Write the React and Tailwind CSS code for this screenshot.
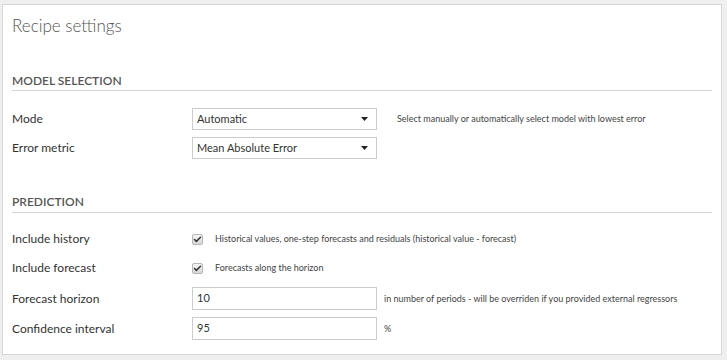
import { Check } from 'lucide-react'

const font = { fontFamily: 'Lato, "Open Sans", sans-serif' }

const Caret = () => (
    <svg width="7" height="4" viewBox="0 0 7 4" className="shrink-0">
        <path d="M0 0 L7 0 L3.5 4 Z" fill="#222" />
    </svg>
)

const SelectBox = ({ value }) => (
    <div className="w-[185px] h-[22px] border border-[#ccc] bg-white flex items-center justify-between pl-[4px] pr-[8px] text-[11px] text-[#333]">
        <span>{value}</span>
        <Caret />
    </div>
)

const InputBox = ({ value }) => (
    <div className="w-[185px] h-[23px] border border-[#ccc] bg-white flex items-center pl-[4px] text-[11px] text-[#333]">
        {value}
    </div>
)

const CheckBox = () => (
    <div className="w-[11px] h-[11px] rounded-[2px] border border-[#b5b5b5] bg-gradient-to-b from-[#f4f4f4] to-[#d8d8d8] flex items-center justify-center">
        <Check size={9} strokeWidth={4} className="text-[#333]" />
    </div>
)

const Row = ({ label, children, help, helpGap = 'ml-[20px]', className = '' }) => (
    <div className={`flex items-center h-[22px] ${className}`}>
        <div className="w-[180px] text-[12px] text-[#333]">{label}</div>
        {children}
        {help && <div className={`${helpGap} text-[9px] text-[#444]`}>{help}</div>}
    </div>
)

const Section = ({ title, className = '' }) => (
    <div className={`text-[12px] font-semibold text-[#555] leading-[16px] pb-[1px] border-b border-[#d5d5d5] ${className}`}>
        {title}
    </div>
)

export default function App() {
    return (
        <div className="w-[727px] h-[360px] bg-[#efefef] pt-[4px] pl-[2px]" style={font}>
            <div className="w-[720px] h-[351px] bg-white border border-[#d6d6d6] px-[9px] pt-[10px]">
                <div className="text-[17px] font-light leading-[22px] text-[#555]">Recipe settings</div>

                <Section title="MODEL SELECTION" className="mt-[36px]" />
                <Row label="Mode" help="Select manually or automatically select model with lowest error" className="mt-[17px]">
                    <SelectBox value="Automatic" />
                </Row>
                <Row label="Error metric" className="mt-[7px]">
                    <SelectBox value="Mean Absolute Error" />
                </Row>

                <Section title="PREDICTION" className="mt-[35px] pb-[2px]" />
                <Row label="Include history" help="Historical values, one-step forecasts and residuals (historical value - forecast)" helpGap="ml-[12px]" className="mt-[15px]">
                    <CheckBox />
                </Row>
                <Row label="Include forecast" help="Forecasts along the horizon" helpGap="ml-[12px]" className="mt-[7px]">
                    <CheckBox />
                </Row>
                <Row label="Forecast horizon" help="in number of periods - will be overriden if you provided external regressors" helpGap="ml-[7px]" className="mt-[8px] h-[23px]">
                    <InputBox value="10" />
                </Row>
                <Row label="Confidence interval" help="%" helpGap="ml-[7px]" className="mt-[7px] h-[23px]">
                    <InputBox value="95" />
                </Row>
            </div>
        </div>
    )
}
